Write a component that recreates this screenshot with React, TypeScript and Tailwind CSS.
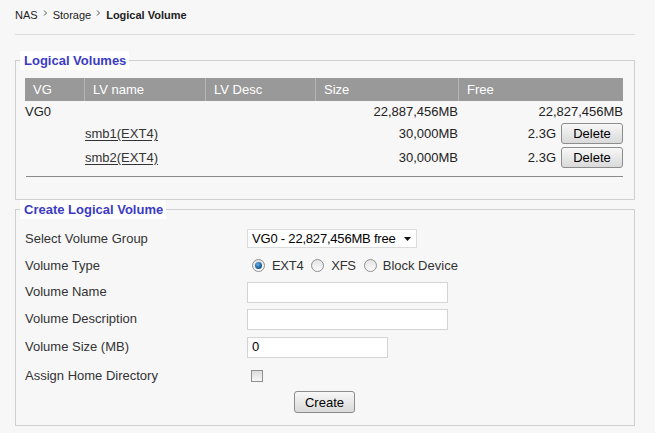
import React from 'react'

const FONT = { fontFamily: '"Liberation Sans", Arial, sans-serif' }

function Crumb() {
  return (
    <svg width="5" height="6" viewBox="0 0 5 6" className="mx-[5px] -mt-[6px] inline-block" aria-hidden>
      <path d="M1 0.5 L3.5 3 L1 5.5" fill="none" stroke="#555" strokeWidth="1" />
    </svg>
  )
}

function Radio({ checked }: { checked?: boolean }) {
  return (
    <span className="flex h-[13px] w-[13px] items-center justify-center rounded-full border border-[#8f8f8f] bg-linear-to-b from-[#e4e4e4] to-[#fbfbfb]">
      {checked && (
        <span className="h-[7px] w-[7px] rounded-full bg-[radial-gradient(circle_at_40%_35%,#5fb0e8,#1c5f94_60%,#0d3d66)]" />
      )}
    </span>
  )
}

function GrayButton({ label, w, h }: { label: string; w: string; h: string }) {
  return (
    <button
      className={`${w} ${h} flex items-center justify-center rounded-[3px] border border-[#8c8c8c] bg-linear-to-b from-[#f7f7f7] to-[#dadada] text-[13px] leading-none text-black`}
    >
      {label}
    </button>
  )
}

const volumes = [
  { name: 'smb1(EXT4)', size: '30,000MB', free: '2.3G' },
  { name: 'smb2(EXT4)', size: '30,000MB', free: '2.3G' },
]

export default function App() {
  return (
    <div className="min-h-[433px] w-[655px] bg-[#f7f7f7] px-[15px] pt-[8px] text-[#333]" style={FONT}>
      {/* breadcrumb */}
      <div className="flex h-[15px] items-center text-[11px] leading-[15px] text-[#222]">
        <span>NAS</span>
        <Crumb />
        <span>Storage</span>
        <Crumb />
        <span className="font-bold">Logical Volume</span>
      </div>
      <div className="mt-[11px] h-px w-[620px] bg-[#dcdcdc]" />

      {/* list of logical volumes */}
      <fieldset className="mt-[16px] w-[620px] border border-[#cfcfcf] pr-[10px] pl-[9px] pt-[8px] pb-[22px]">
        <legend className="-ml-[5px] bg-white pr-[3px] pl-[4px] text-[13px] leading-[19px] font-bold text-[#3b3bc2]">
          Logical Volumes
        </legend>
        <div className="grid grid-cols-[59px_121px_110px_143px_165px] text-[13px] text-[#222]">
          {['VG', 'LV name', 'LV Desc', 'Size', 'Free'].map((h, i) => (
            <div
              key={h}
              className={`flex h-[23px] items-center bg-[#999] pl-[8px] text-white ${i > 0 ? 'border-l border-[#b5b5b5]' : ''}`}
            >
              {h}
            </div>
          ))}

          <div className="flex h-[21px] items-center">VG0</div>
          <div />
          <div />
          <div className="flex h-[21px] items-center justify-end">22,887,456MB</div>
          <div className="flex h-[21px] items-center justify-end">22,827,456MB</div>

          {volumes.map((v) => (
            <React.Fragment key={v.name}>
              <div className="h-[23.5px]" />
              <div className="flex h-[23.5px] items-center pl-[1px]">
                <a className="text-[#333] underline underline-offset-2">{v.name}</a>
              </div>
              <div />
              <div className="flex h-[23.5px] items-center justify-end">{v.size}</div>
              <div className="flex h-[23.5px] items-center justify-end gap-[5px]">
                <span>{v.free}</span>
                <GrayButton label="Delete" w="w-[62px]" h="h-[21px]" />
              </div>
            </React.Fragment>
          ))}
        </div>
        <div className="mt-[7px] ml-[1px] h-px w-[597px] bg-[#8a8a8a]" />
      </fieldset>

      {/* create form */}
      <fieldset className="mt-0 w-[620px] border border-[#cfcfcf] pr-[10px] pl-[9px] pt-[6px] pb-[12px]">
        <legend className="-ml-[5px] bg-white pr-[3px] pl-[4px] text-[13px] leading-[19px] font-bold text-[#3b3bc2]">
          Create Logical Volume
        </legend>
        <div className="grid grid-cols-[222px_1fr] text-[13px] text-[#333]">
          <div className="flex h-[27px] items-center">Select Volume Group</div>
          <div className="flex h-[27px] items-center">
            <div className="relative flex h-[19px] w-[170px] items-center border border-[#dcdcdc] bg-white pl-[4px] tracking-[-0.2px] text-black">
              VG0 - 22,827,456MB free
              <svg width="7" height="4" viewBox="0 0 7 4" className="absolute top-[7px] right-[5px]" aria-hidden>
                <path d="M0 0 H7 L3.5 4 Z" fill="#111" />
              </svg>
            </div>
          </div>

          <div className="flex h-[27px] items-center">Volume Type</div>
          <div className="flex h-[27px] items-center pl-[5px] text-[#333]">
            <Radio checked />
            <span className="ml-[7px] tracking-[-0.3px]">EXT4</span>
            <span className="ml-[8px]"><Radio /></span>
            <span className="ml-[7px] tracking-[-0.3px]">XFS</span>
            <span className="ml-[8px]"><Radio /></span>
            <span className="ml-[6px]">Block Device</span>
          </div>

          <div className="flex h-[26px] items-center">Volume Name</div>
          <div className="flex h-[26px] items-center">
            <div className="h-[21px] w-[201px] border border-[#d4d4d4] bg-white" />
          </div>

          <div className="flex h-[28px] items-center">Volume Description</div>
          <div className="flex h-[28px] items-center">
            <div className="h-[21px] w-[201px] border border-[#d4d4d4] bg-white" />
          </div>

          <div className="flex h-[28px] items-center">Volume Size (MB)</div>
          <div className="flex h-[28px] items-center">
            <div className="flex h-[21px] w-[141px] items-center border border-[#d4d4d4] bg-white pl-[4px] text-black">0</div>
          </div>

          <div className="flex h-[30px] items-center">Assign Home Directory</div>
          <div className="flex h-[30px] items-center pl-[4px]">
            <span className="h-[12px] w-[12px] border border-[#8f8f8f] bg-linear-to-b from-[#dcdcdc] to-[#f7f7f7]" />
          </div>
        </div>
        <div className="flex justify-center">
          <GrayButton label="Create" w="w-[61px]" h="h-[22px]" />
        </div>
      </fieldset>
    </div>
  )
}
